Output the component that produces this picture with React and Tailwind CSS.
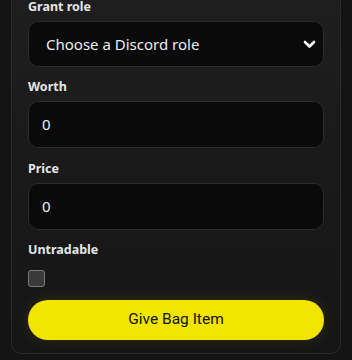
import React from "react";

function Label({ children, className = "" }) {
  return (
    <div className={"h-[14px] text-[12.5px] leading-[14px] font-bold text-[#e6e6e6] " + className}>
      {children}
    </div>
  );
}

function Field({ value }) {
  return (
    <div className="mt-[7px] h-[47px] rounded-[10px] border border-[#2c2c2c] bg-[#0a0a0a] flex items-center pl-[13px] text-[15px] text-[#eeeeee]">
      {value}
    </div>
  );
}

export default function App() {
  return (
    <div
      className="w-[352px] h-[360px] bg-[#141414] overflow-hidden"
      style={{ fontFamily: '"Noto Sans", "Open Sans", sans-serif' }}
    >
      <div className="ml-[11px] w-[330px] h-[354px] rounded-b-[10px] border border-t-0 border-[#2a2a2a] bg-gradient-to-b from-[#1e1e1e] to-[#151515] px-[16px] pt-0">
        <Label>Grant role</Label>
        <div className="mt-[7px] h-[46px] rounded-[10px] border border-[#2c2c2c] bg-[#0a0a0a] flex items-center justify-between pl-[17px] pr-[6px] text-[15px] text-[#eeeeee]">
          <span>Choose a Discord role</span>
          <svg width="13" height="10" viewBox="0 0 13 10" className="mr-[1px]">
            <path d="M2 3 L6.5 7.5 L11 3" fill="none" stroke="#ffffff" strokeWidth="2.6" strokeLinecap="round" strokeLinejoin="round" />
          </svg>
        </div>
        <Label className="mt-[13px]">Worth</Label>
        <Field value="0" />
        <Label className="mt-[14px]">Price</Label>
        <Field value="0" />
        <Label className="mt-[13px]">Untradable</Label>
        <div className="mt-[13px] w-[17px] h-[17px] rounded-[3px] border border-[#7a7a7a] bg-[#3a3a3a]" />
        <button
          className="mt-[13px] w-full h-[40px] rounded-full bg-[#f2e600] text-[15.5px] text-[#111111] flex items-center justify-center shadow-[0_0_14px_rgba(242,230,0,0.12)]"
          style={{ fontFamily: 'Roboto, "Noto Sans", sans-serif' }}
        >
          Give Bag Item
        </button>
      </div>
    </div>
  );
}
